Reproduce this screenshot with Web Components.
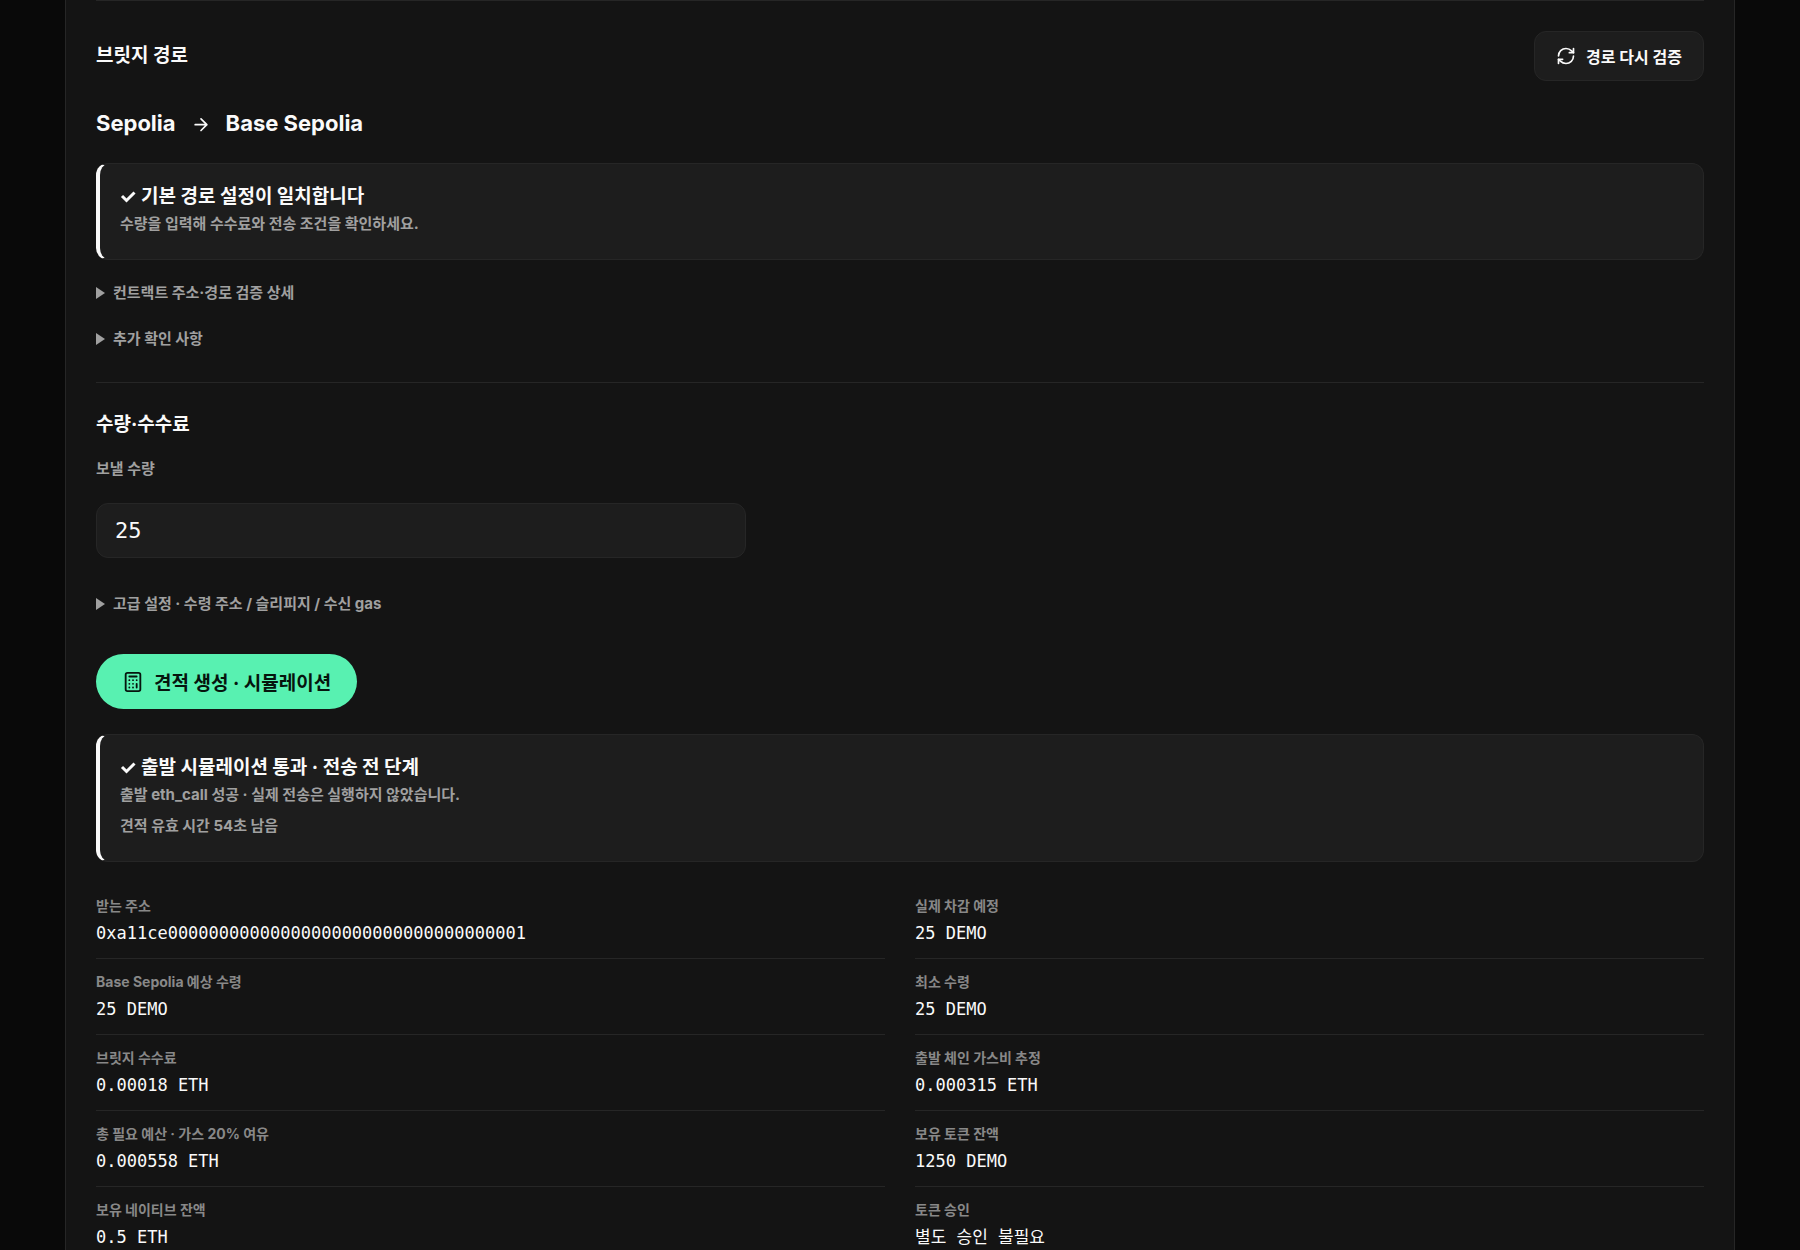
<!DOCTYPE html>
<html lang="ko">
<head>
<meta charset="utf-8">
<title>브릿지</title>
<style>
  :root {
    --bg: #090909;
    --panel: #141414;
    --surface: #1d1d1d;
    --line: #262626;
    --text: #fafafa;
    --muted: #a0a0a0;
    --label: #888888;
    --accent: #58f1b1;
    --sans: Inter, "Noto Sans CJK KR", sans-serif;
    --mono: "DejaVu Sans Mono", "Noto Sans CJK KR", monospace;
  }
  body {
    margin: 0;
    background: var(--bg);
    color: var(--text);
    font: 700 16px/24px var(--sans);
    overflow-y: hidden;
    height: 100vh;
  }
</style>
</head>
<body>
<bridge-panel>
  <bridge-section>
    <section-header>
      브릿지 경로
      <action-button slot="action" kind="ghost" icon="refresh">경로 다시 검증</action-button>
    </section-header>
    <route-line from="Sepolia" to="Base Sepolia"></route-line>
    <status-notice heading="기본 경로 설정이 일치합니다">
      <p>수량을 입력해 수수료와 전송 조건을 확인하세요.</p>
    </status-notice>
    <more-info label="컨트랙트 주소·경로 검증 상세"></more-info>
    <more-info label="추가 확인 사항"></more-info>
  </bridge-section>
  <bridge-section>
    <section-header>수량·수수료</section-header>
    <amount-field label="보낼 수량" value="25"></amount-field>
    <more-info label="고급 설정 · 수령 주소 / 슬리피지 / 수신 gas"></more-info>
    <action-button kind="primary" icon="calculator">견적 생성 · 시뮬레이션</action-button>
    <status-notice heading="출발 시뮬레이션 통과 · 전송 전 단계">
      <p>출발 eth_call 성공 · 실제 전송은 실행하지 않았습니다.</p>
      <p>견적 유효 시간 54초 남음</p>
    </status-notice>
    <quote-grid></quote-grid>
  </bridge-section>
</bridge-panel>

<script>
const icons = {
  refresh: `
    <svg width="20" height="20" viewBox="0 0 24 24" fill="none" stroke="currentColor" stroke-width="2" stroke-linecap="round" stroke-linejoin="round">
      <path d="M3 12a9 9 0 0 1 9-9 9.75 9.75 0 0 1 6.74 2.74L21 8"/><path d="M21 3v5h-5"/>
      <path d="M21 12a9 9 0 0 1-9 9 9.75 9.75 0 0 1-6.74-2.74L3 16"/><path d="M8 16H3v5"/>
    </svg>`,
  calculator: `
    <svg width="22" height="22" viewBox="0 0 24 24" fill="none" stroke="currentColor" stroke-width="2" stroke-linecap="round" stroke-linejoin="round">
      <rect x="4" y="2" width="16" height="20" rx="2"/><path d="M8 6h8M16 14v4M16 10h.01M12 10h.01M8 10h.01M12 14h.01M8 14h.01M12 18h.01M8 18h.01"/>
    </svg>`,
  arrow: `
    <svg width="20" height="20" viewBox="0 0 24 24" fill="none" stroke="currentColor" stroke-width="2" stroke-linecap="round" stroke-linejoin="round">
      <path d="M5 14h14M12 7l7 7-7 7"/>
    </svg>`,
  check: `
    <svg width="16" height="16" viewBox="0 0 16 16" fill="none" stroke="currentColor" stroke-width="3">
      <path d="M2 7l4.5 4.5L14.5 3.5"/>
    </svg>`
};

class BridgePanel extends HTMLElement {
  constructor() {
    super();
    this.attachShadow({ mode: 'open' });
    this.shadowRoot.innerHTML = `
      <style>
        :host {
          display: block;
          box-sizing: border-box;
          margin: 0 65px;
          padding: 0 30px;
          background: var(--panel);
          border: 1px solid var(--line);
          border-width: 0 1px;
        }
      </style>
      <slot></slot>
    `;
  }
}

class BridgeSection extends HTMLElement {
  constructor() {
    super();
    this.attachShadow({ mode: 'open' });
    this.shadowRoot.innerHTML = `
      <style>
        :host {
          display: flex;
          flex-direction: column;
          align-items: stretch;
          padding: 30px 0;
          border-top: 1px solid var(--line);
        }
      </style>
      <slot></slot>
    `;
  }
}

class SectionHeader extends HTMLElement {
  constructor() {
    super();
    this.attachShadow({ mode: 'open' });
    this.shadowRoot.innerHTML = `
      <style>
        :host {
          display: flex;
          justify-content: space-between;
          align-items: center;
        }
        h2 {
          margin: 0;
          font-size: 19px;
          line-height: 24px;
        }
      </style>
      <h2><slot></slot></h2>
      <slot name="action"></slot>
    `;
  }
}

class ActionButton extends HTMLElement {
  constructor() {
    super();
    this.attachShadow({ mode: 'open' });
  }

  connectedCallback() {
    this.shadowRoot.innerHTML = `
      <style>
        :host { display: block; }
        button {
          display: flex;
          align-items: center;
          gap: 10px;
          font-family: inherit;
          font-weight: 700;
          cursor: pointer;
        }
        :host([kind="ghost"]) button {
          height: 50px;
          padding: 0 21px;
          border: 1px solid var(--line);
          border-radius: 12px;
          background: var(--surface);
          color: var(--text);
          font-size: 16px;
        }
        :host([kind="primary"]) { margin: 37px 0 25px; }
        :host([kind="primary"]) button {
          height: 55px;
          padding: 0 26px;
          border: 0;
          border-radius: 28px;
          background: var(--accent);
          color: #06150e;
          font-size: 19px;
        }
      </style>
      <button type="button">${icons[this.getAttribute('icon')]}<slot></slot></button>
    `;
  }
}

class RouteLine extends HTMLElement {
  constructor() {
    super();
    this.attachShadow({ mode: 'open' });
  }

  connectedCallback() {
    this.shadowRoot.innerHTML = `
      <style>
        :host {
          display: flex;
          align-items: center;
          gap: 15px;
          margin: 26px 0 24px;
          font-size: 22px;
          line-height: 32px;
        }
      </style>
      <span>${this.getAttribute('from')}</span>
      ${icons.arrow}
      <span>${this.getAttribute('to')}</span>
    `;
  }
}

class StatusNotice extends HTMLElement {
  constructor() {
    super();
    this.attachShadow({ mode: 'open' });
  }

  connectedCallback() {
    this.shadowRoot.innerHTML = `
      <style>
        :host {
          display: block;
          padding: 18px 20px 16px;
          border: 1px solid var(--line);
          border-left: 4px solid var(--text);
          border-radius: 12px;
          background: var(--surface);
        }
        .heading {
          display: flex;
          align-items: center;
          gap: 5px;
          font-size: 19px;
          line-height: 30px;
        }
        ::slotted(p) {
          margin: 0 0 7px;
          color: var(--muted);
          font-size: 15px;
          line-height: 24px;
        }
      </style>
      <div class="heading">${icons.check}<span>${this.getAttribute('heading')}</span></div>
      <slot></slot>
    `;
  }
}

class MoreInfo extends HTMLElement {
  constructor() {
    super();
    this.attachShadow({ mode: 'open' });
  }

  connectedCallback() {
    this.shadowRoot.innerHTML = `
      <style>
        :host { display: block; padding-top: 19px; }
        summary {
          display: flex;
          align-items: center;
          gap: 8px;
          color: var(--muted);
          font-size: 15px;
          line-height: 27px;
          cursor: pointer;
        }
        summary::before {
          content: "";
          border-left: 9px solid currentColor;
          border-top: 6px solid transparent;
          border-bottom: 6px solid transparent;
        }
      </style>
      <details><summary>${this.getAttribute('label')}</summary></details>
    `;
  }
}

class AmountField extends HTMLElement {
  constructor() {
    super();
    this.attachShadow({ mode: 'open' });
  }

  connectedCallback() {
    this.shadowRoot.innerHTML = `
      <style>
        :host { display: block; max-width: 650px; margin: 20px 0 13px; }
        label {
          display: block;
          color: var(--muted);
          font-size: 15px;
          line-height: 24px;
        }
        input {
          box-sizing: border-box;
          display: block;
          width: 100%;
          height: 55px;
          margin-top: 22px;
          padding: 0 18px;
          border: 1px solid var(--line);
          border-radius: 12px;
          background: var(--surface);
          color: var(--text);
          font: 400 22px var(--mono);
        }
      </style>
      <label for="amount">${this.getAttribute('label')}</label>
      <input id="amount" type="text" inputmode="decimal" value="${this.getAttribute('value')}">
    `;
  }
}

class QuoteGrid extends HTMLElement {
  constructor() {
    super();
    this.attachShadow({ mode: 'open' });
    this.shadowRoot.innerHTML = `
      <style>
        :host { display: block; margin-top: 21px; }
        dl {
          display: grid;
          grid-template-columns: 1fr 1fr;
          column-gap: 30px;
          margin: 0;
        }
        .item {
          padding: 11px 0 10px;
          border-bottom: 1px solid var(--line);
        }
        dt {
          color: var(--label);
          font-size: 14px;
          line-height: 24px;
        }
        dd {
          margin: 0;
          font: 400 17px/30px var(--mono);
        }
      </style>
      <dl></dl>
    `;
  }

  get rows() {
    return this._rows || [];
  }

  set rows(value) {
    this._rows = value;
    this.render();
  }

  render() {
    this.shadowRoot.querySelector('dl').innerHTML = this.rows.map(([label, value]) => `
      <div class="item"><dt>${label}</dt><dd>${value}</dd></div>
    `).join('');
  }
}

customElements.define('bridge-panel', BridgePanel);
customElements.define('bridge-section', BridgeSection);
customElements.define('section-header', SectionHeader);
customElements.define('action-button', ActionButton);
customElements.define('route-line', RouteLine);
customElements.define('status-notice', StatusNotice);
customElements.define('more-info', MoreInfo);
customElements.define('amount-field', AmountField);
customElements.define('quote-grid', QuoteGrid);

document.querySelector('quote-grid').rows = [
  ['받는 주소', '0xa11ce00000000000000000000000000000000001'],
  ['실제 차감 예정', '25 DEMO'],
  ['Base Sepolia 예상 수령', '25 DEMO'],
  ['최소 수령', '25 DEMO'],
  ['브릿지 수수료', '0.00018 ETH'],
  ['출발 체인 가스비 추정', '0.000315 ETH'],
  ['총 필요 예산 · 가스 20% 여유', '0.000558 ETH'],
  ['보유 토큰 잔액', '1250 DEMO'],
  ['보유 네이티브 잔액', '0.5 ETH'],
  ['토큰 승인', '별도 승인 불필요']
];
</script>
</body>
</html>
